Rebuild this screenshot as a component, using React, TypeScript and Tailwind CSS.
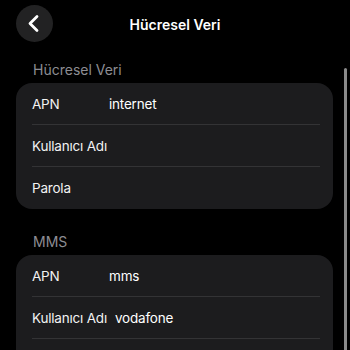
import React from "react";

const font = { fontFamily: "Inter, 'Noto Sans', sans-serif" };

function Row({ label, value, last }: { label: string; value?: string; last?: boolean }) {
  return (
    <div className="relative flex h-[42px] items-center px-4">
      <span className="min-w-[69px] text-[13.5px] leading-[18px] tracking-[-0.2px] text-[#f2f2f2]">{label}</span>
      {value && (
        <span className="ml-[8px] text-[13.5px] leading-[18px] tracking-[-0.2px] text-white">{value}</span>
      )}
      {!last && <div className="absolute bottom-0 left-4 right-[13px] h-px bg-[#333335]" />}
    </div>
  );
}

function Section({ title, rows }: { title: string; rows: { label: string; value?: string }[] }) {
  return (
    <div className="flex flex-col">
      <div className="mb-[4px] pl-[17px] text-[14px] leading-[18px] text-[#8d8d93]">{title}</div>
      <div className="overflow-hidden rounded-[16px] bg-[#1c1c1e]">
        {rows.map((r, i) => (
          <Row key={i} label={r.label} value={r.value} last={i === rows.length - 1} />
        ))}
      </div>
    </div>
  );
}

export default function App() {
  return (
    <div className="relative h-[350px] w-[350px] overflow-hidden bg-black" style={font}>
      <div className="relative flex h-[48px] items-center justify-center">
        <div className="absolute left-4 top-[5px] flex h-[37px] w-[37px] items-center justify-center rounded-full bg-[#222223]">
          <svg width="37" height="37" viewBox="0 0 37 37">
            <polyline
              points="21,11.5 14,18.5 21,25.5"
              fill="none"
              stroke="white"
              strokeWidth="2.8"
              strokeLinecap="round"
              strokeLinejoin="round"
            />
          </svg>
        </div>
        <span className="text-[14px] font-semibold text-white">Hücresel Veri</span>
      </div>
      <div className="flex flex-col gap-[24px] pl-4 pr-[17px] pt-[13px]">
        <Section
          title="Hücresel Veri"
          rows={[{ label: "APN", value: "internet" }, { label: "Kullanıcı Adı" }, { label: "Parola" }]}
        />
        <Section
          title="MMS"
          rows={[{ label: "APN", value: "mms" }, { label: "Kullanıcı Adı", value: "vodafone" }, { label: "Parola" }]}
        />
      </div>
      <div className="absolute left-[344px] top-[68px] h-[290px] w-[3px] rounded-full bg-[#8a8a8a]" />
    </div>
  );
}
